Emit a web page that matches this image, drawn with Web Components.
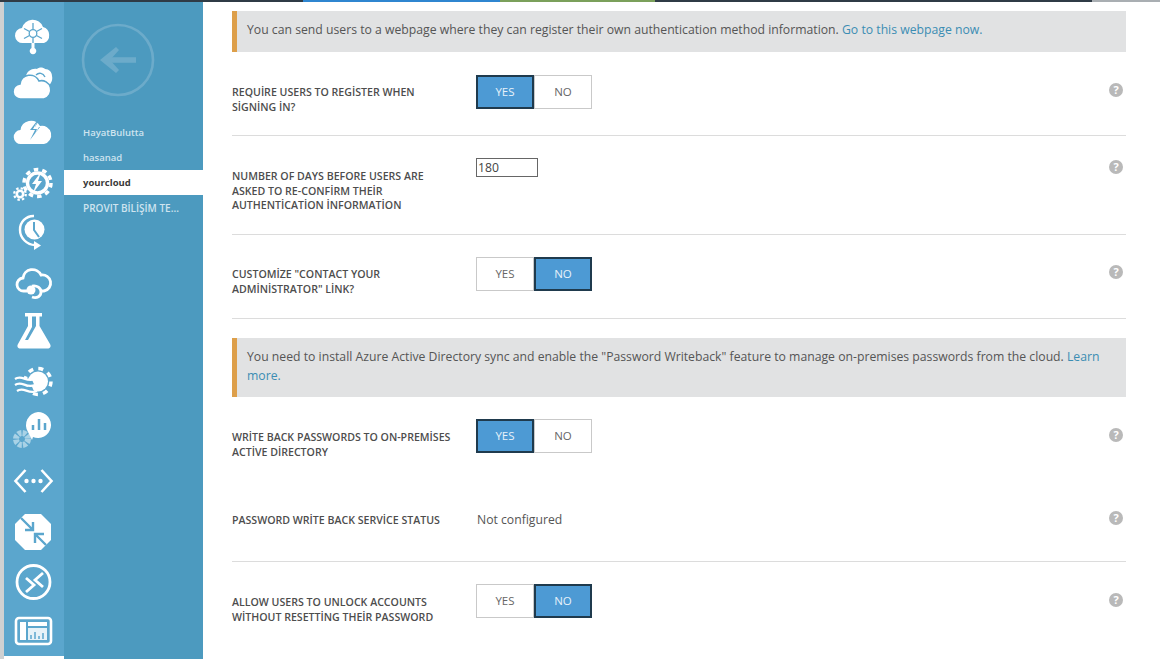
<!DOCTYPE html>
<html>
<head>
<meta charset="utf-8">
<style>
  html, body { margin: 0; height: 100%; overflow: hidden; background: #fff; }
  body { font-family: "Open Sans", "Liberation Sans", sans-serif; }
  app-shell { height: 659px; }
</style>
</head>
<body>
<app-shell>
  <icon-rail slot="rail"></icon-rail>
  <side-nav slot="nav">
    <nav-item>HayatBulutta</nav-item>
    <nav-item>hasanad</nav-item>
    <nav-item active>yourcloud</nav-item>
    <nav-item style="font-size:10px">PROVIT BİLİŞİM TE...</nav-item>
  </side-nav>
  <notice-bar style="margin-top:11px;height:41px">You can send users to a webpage where they can register their own authentication method information. <a>Go to this webpage now.</a></notice-bar>
  <setting-row h="84" top="23" label-top="10" help-top="8" line>
    <span slot="label">REQUİRE USERS TO REGİSTER WHEN<br>SİGNİNG İN?</span>
    <yes-no value="yes"></yes-no>
  </setting-row>
  <setting-row h="99" top="22" label-top="11" help-top="2" line>
    <span slot="label">NUMBER OF DAYS BEFORE USERS ARE<br>ASKED TO RE-CONFİRM THEİR<br>AUTHENTİCATİON İNFORMATİON</span>
    <days-input></days-input>
  </setting-row>
  <setting-row h="84" top="22" label-top="10" help-top="8" line>
    <span slot="label">CUSTOMİZE "CONTACT YOUR<br>ADMİNİSTRATOR" LİNK?</span>
    <yes-no value="no"></yes-no>
  </setting-row>
  <notice-bar style="margin-top:19px;height:59px">You need to install Azure Active Directory sync and enable the "Password Writeback" feature to manage on-premises passwords from the cloud. <a>Learn</a> <a>more.</a></notice-bar>
  <setting-row h="84" top="22" label-top="11" help-top="9">
    <span slot="label">WRİTE BACK PASSWORDS TO ON-PREMİSES<br>ACTİVE DİRECTORY</span>
    <yes-no value="yes"></yes-no>
  </setting-row>
  <setting-row h="81" top="0" help-top="-4" line center style="padding-bottom:2px">
    <span slot="label">PASSWORD WRİTE BACK SERVİCE STATUS</span>
    <span class="status" style="display:block;margin-left:1px;font-size:12.2px;color:#555">Not configured</span>
  </setting-row>
  <setting-row h="76" top="22" label-top="11" help-top="9">
    <span slot="label">ALLOW USERS TO UNLOCK ACCOUNTS<br>WİTHOUT RESETTİNG THEİR PASSWORD</span>
    <yes-no value="no"></yes-no>
  </setting-row>
</app-shell>

<script>
function shadow(el, html) {
  el.attachShadow({ mode: 'open' });
  el.shadowRoot.innerHTML = html;
}

class AppShell extends HTMLElement {
  constructor() {
    super();
    shadow(this, `
      <style>
        :host { display: flex; flex-direction: column; width: 1160px; overflow: hidden; }
        .top { display: flex; height: 2px; flex: none; background: #2f3b46; }
        .top i { display: block; height: 2px; }
        .body { display: flex; flex: 1; min-height: 0; }
        .strip { width: 4px; background: #cfd1d2; flex: none; }
        .rail { width: 60px; flex: none; }
        .nav { width: 139px; flex: none; }
        main { flex: none; width: 894px; margin-left: 29px; display: flex; flex-direction: column; margin-top: -2px; }
      </style>
      <div class="top">
        <i style="width:303px"></i><i style="width:197px;background:#2f86d0"></i><i style="width:155px;background:#7ba05b"></i>
        <i style="width:437px"></i><i style="width:68px;background:#a9aeb2"></i>
      </div>
      <div class="body">
        <div class="strip"></div>
        <div class="rail"><slot name="rail"></slot></div>
        <div class="nav"><slot name="nav"></slot></div>
        <main><slot></slot></main>
      </div>`);
  }
}

const railIcons = [
  // directory cloud
  `<g transform="translate(0 3)"><path fill="#fff" d="M10 26a7.500 7.500 0 0 1-1-15 11 11 0 0 1 21-1 8.500 8.500 0 0 1 1 16H21.500v5a3.300 3.300 0 1 1-3 0v-5z"/>
   <g stroke="#5ba6cd" stroke-width="1.300" fill="none"><circle cx="20" cy="16.500" r="3.800"/><path d="M20 6v6.500M20 20.500V26M11 11.500l5.500 3M23.500 18.500l5.500 3M11 21.500l5.500-3M23.500 14.500l5.500-3"/></g></g>`,
  // two clouds
  `<path fill="#fff" d="M13 12c1-5 6-8 11-7 2-2 6-2 8 0 4 0 7 3 7 7 1 4-1 8-4 10l-5 2-17-12z"/>
   <path fill="none" stroke="#5ba6cd" stroke-width="1.400" d="M23 11c3-3 7-2 9 2"/>
   <path fill="#fff" stroke="#5ba6cd" stroke-width="1.600" d="M8 35a7.500 7.500 0 0 1-1-15 10 10 0 0 1 19-3 9 9 0 0 1 5 18z"/>`,
  // cloud + bolt
  `<path fill="#fff" d="M8 31a7 7 0 0 1-.5-14A10.500 10.500 0 0 1 27 13a9 9 0 0 1 4 18z"/>
   <path fill="#5ba6cd" d="M27 4l-10 13h5l-5 10 10-13h-5l6-10z"/><path fill="#fff" d="M24 9l-4 7h4l-2 5 4-7h-4l2-5z"/>`,
  // gear + bolt
  `<circle cx="24.500" cy="20" r="10" fill="none" stroke="#fff" stroke-width="3.400"/><circle cx="24.500" cy="20" r="13.500" fill="none" stroke="#fff" stroke-width="3.500" stroke-dasharray="4.500 4"/>
   <path fill="#fff" d="M28 9l-9 12h4l-3 9 9-12h-4l3-9z"/>
   <circle cx="7" cy="31" r="3.200" fill="none" stroke="#fff" stroke-width="2.600"/><circle cx="7" cy="31" r="5.800" fill="none" stroke="#fff" stroke-width="2.200" stroke-dasharray="2.400 2.150"/>`,
  // clock with arrow
  `<circle cx="21.500" cy="16.500" r="10" fill="#fff"/><path d="M21 9v8l5 7" fill="none" stroke="#5ba6cd" stroke-width="2"/>
   <path fill="none" stroke="#fff" stroke-width="2.400" d="M21 3a13.500 13.500 0 0 0-14 14c0 8 7 15 15 15"/><path fill="#fff" d="M21 28l7 4.500-7 4.500z"/>`,
  // cloud outline with sync
  `<path fill="none" stroke="#fff" stroke-width="2.800" d="M14 28h-3a6.500 6.500 0 0 1-1-13 9.500 9.500 0 0 1 18-3 7.800 7.800 0 0 1 3 16h-3"/>
   <path fill="none" stroke="#fff" stroke-width="2.800" d="M19 34c5 2 9-1 9-5s-4-7-9-6"/><circle cx="18" cy="27" r="4.500" fill="#fff"/>`,
  // flask
  `<path transform="translate(1 -2)" fill="#fff" fill-rule="evenodd" d="M11 2h17v3.500h-2.500V15L36 33c1.500 2.500 0 4.500-2.500 4.500h-27C4 37.500 2.500 35.500 4 33l10-18V5.500h-3zM18 5.500V16l-7 13h3l8-14V5.500z"/>`,
  // waves + gear
  `<circle cx="25" cy="19.500" r="10" fill="#fff"/><circle cx="25" cy="19.500" r="13" fill="none" stroke="#fff" stroke-width="3.500" stroke-dasharray="5 5.200"/>
   <g fill="none" stroke="#5ba6cd" stroke-width="6"><path d="M0 20c7-5 11 4 20 0M0 27c7-5 11 4 20 0"/></g>
   <g fill="none" stroke="#fff" stroke-width="2.200"><path d="M2 17c7-5 11 4 20 0M2 23c7-5 11 4 20 0M4 29c7-5 11 4 20 0"/></g>`,
  // bubble + chart
  `<circle cx="9" cy="27" r="6" fill="none" stroke="#a9d2e6" stroke-width="6" stroke-dasharray="3.500 1.200"/>
   <path fill="#fff" d="M25 0a13 13 0 1 1-5 25l-1 3-4-8A13 13 0 0 1 25 0z"/>
   <path stroke="#5ba6cd" stroke-width="2.500" d="M20 18v-5M26 18V7M32 18v-7"/>`,
  // <...>
  `<path fill="none" stroke="#fff" stroke-width="2.600" d="M12.500 8L2.500 19l10 11M28.500 8l10 11-10 11"/>
   <g fill="#fff"><circle cx="13.500" cy="19" r="2.200"/><circle cx="20.500" cy="19" r="2.200"/><circle cx="27.500" cy="19" r="2.200"/></g>`,
  // octagon with arrows
  `<path fill="#fff" d="M12 2h16l10 10v16L28 38H12L2 28V12z"/>
   <g fill="none" stroke="#5ba6cd" stroke-width="2.400"><path d="M8 6l12 12M20 10v8h-8M33 33L22 22M22 31v-9h9"/></g>`,
  // circle with chevrons
  `<circle cx="20.500" cy="20" r="16.500" fill="none" stroke="#fff" stroke-width="2.800"/>
   <path fill="none" stroke="#fff" stroke-width="2.800" d="M13 16l8 7-8 7M30 11l-8 7 8 7"/>`,
  // dashboard
  `<rect x="3" y="7" width="35" height="26" rx="3" fill="none" stroke="#fff" stroke-width="2.600"/>
   <path fill="#fff" d="M7 11h6v18H7zM15 11h19v4H15z"/><rect x="15" y="17" width="19" height="12" fill="#fff" opacity=".85"/>
   <path stroke="#5ba6cd" stroke-width="1.500" d="M18 28v-4M22 28v-7M26 28v-3M30 28v-6"/>`
];

class IconRail extends HTMLElement {
  constructor() {
    super();
    const cells = railIcons.map(i => `<div><svg viewBox="0 0 40 40" width="40" height="40" style="overflow:visible">${i}</svg></div>`).join('');
    shadow(this, `
      <style>
        :host { display: block; height: 654px; background: #5ba6cd; box-sizing: border-box; padding-top: 7px; }
        div { height: 49.800px; display: flex; justify-content: center; align-items: center; padding-right: 2px; }
      </style>${cells}`);
  }
}

class SideNav extends HTMLElement {
  constructor() {
    super();
    shadow(this, `
      <style>
        :host { display: flex; flex-direction: column; height: 100%; background: #4c9abf; }
        svg { display: block; margin: 21px 0 23px 17px; }
      </style>
      <svg width="74" height="74" viewBox="0 0 74 74" fill="none" stroke="#6cabca">
        <circle cx="37" cy="37" r="35" stroke-width="2.600"/>
        <path stroke-width="5.500" d="M55 37H24"/><path fill="#6cabca" stroke="none" d="M35 24L19 37l16 13 3-3-9-10 9-10z"/>
      </svg>
      <slot></slot>`);
  }
}

class NavItem extends HTMLElement {
  constructor() {
    super();
    shadow(this, `
      <style>
        :host { display: flex; align-items: center; height: 25px; padding-left: 19px; font-size: 9.500px; font-weight: 600; color: #cfe4ef; }
        :host([active]) { background: #fff; color: #3a3a3a; font-weight: 700; }
      </style><slot></slot>`);
  }
}

class NoticeBar extends HTMLElement {
  constructor() {
    super();
    shadow(this, `
      <style>
        :host { display: block; flex: none; background: #e1e2e3; border-left: 5px solid #dd9f4a; box-sizing: border-box; padding: 9px 20px 0 10px; font-size: 12.230px; line-height: 19px; color: #555; }
        ::slotted(a) { color: #3b8db3; }
      </style><slot></slot>`);
  }
}

class SettingRow extends HTMLElement {
  static get observedAttributes() { return ['h', 'top', 'label-top', 'help-top']; }
  constructor() {
    super();
    shadow(this, `
      <style>
        :host { display: grid; grid-template-columns: 244px 1fr 17px; flex: none; box-sizing: border-box; font-size: 10.600px; font-weight: 600; line-height: 14.500px; color: #4d4d4d; }
        :host([line]) { border-bottom: 1px solid #dcdcdc; }
        :host([center]) { align-items: center; }
        .help { justify-self: start; width: 14px; height: 14px; border-radius: 50%; background: #b9b9b9; color: #fff; font-size: 11px; font-weight: 700; line-height: 14px; text-align: center; }
        .val { font-weight: 400; }
      </style>
      <div class="label"><slot name="label"></slot></div>
      <div class="val"><slot></slot></div>
      <div class="help">?</div>`);
  }
  attributeChangedCallback(name, oldValue, newValue) {
    if (name === 'h') this.style.height = newValue + 'px';
    if (name === 'top') this.style.paddingTop = newValue + 'px';
    if (name === 'label-top') this.shadowRoot.querySelector('.label').style.paddingTop = newValue + 'px';
    if (name === 'help-top') this.shadowRoot.querySelector('.help').style.marginTop = newValue + 'px';
  }
}

class YesNo extends HTMLElement {
  constructor() {
    super();
    const on = this.getAttribute('value');
    shadow(this, `
      <style>
        :host { display: inline-flex; height: 34px; font-size: 11.500px; font-weight: 400; }
        span { width: 58px; box-sizing: border-box; display: flex; align-items: center; justify-content: center; background: #fff; color: #666; border: 1px solid #c9c9c9; }
        span.on { background: #4d9ad4; color: #e8f2fa; border: 2px solid #1f3a4d; }
      </style>
      <span class="${on === 'yes' ? 'on' : ''}">YES</span><span class="${on === 'no' ? 'on' : ''}">NO</span>`);
  }
}

class DaysInput extends HTMLElement {
  constructor() {
    super();
    shadow(this, `
      <style>
        :host { display: block; font-size: 12.200px; font-weight: 400; color: #444; }
        div { width: 62px; height: 19px; box-sizing: border-box; border: 1px solid #666; line-height: 17px; padding-left: 1px; background: #fff; }
      </style><div>180</div>`);
  }
}

customElements.define('app-shell', AppShell);
customElements.define('icon-rail', IconRail);
customElements.define('side-nav', SideNav);
customElements.define('nav-item', NavItem);
customElements.define('notice-bar', NoticeBar);
customElements.define('setting-row', SettingRow);
customElements.define('yes-no', YesNo);
customElements.define('days-input', DaysInput);
</script>
</body>
</html>
